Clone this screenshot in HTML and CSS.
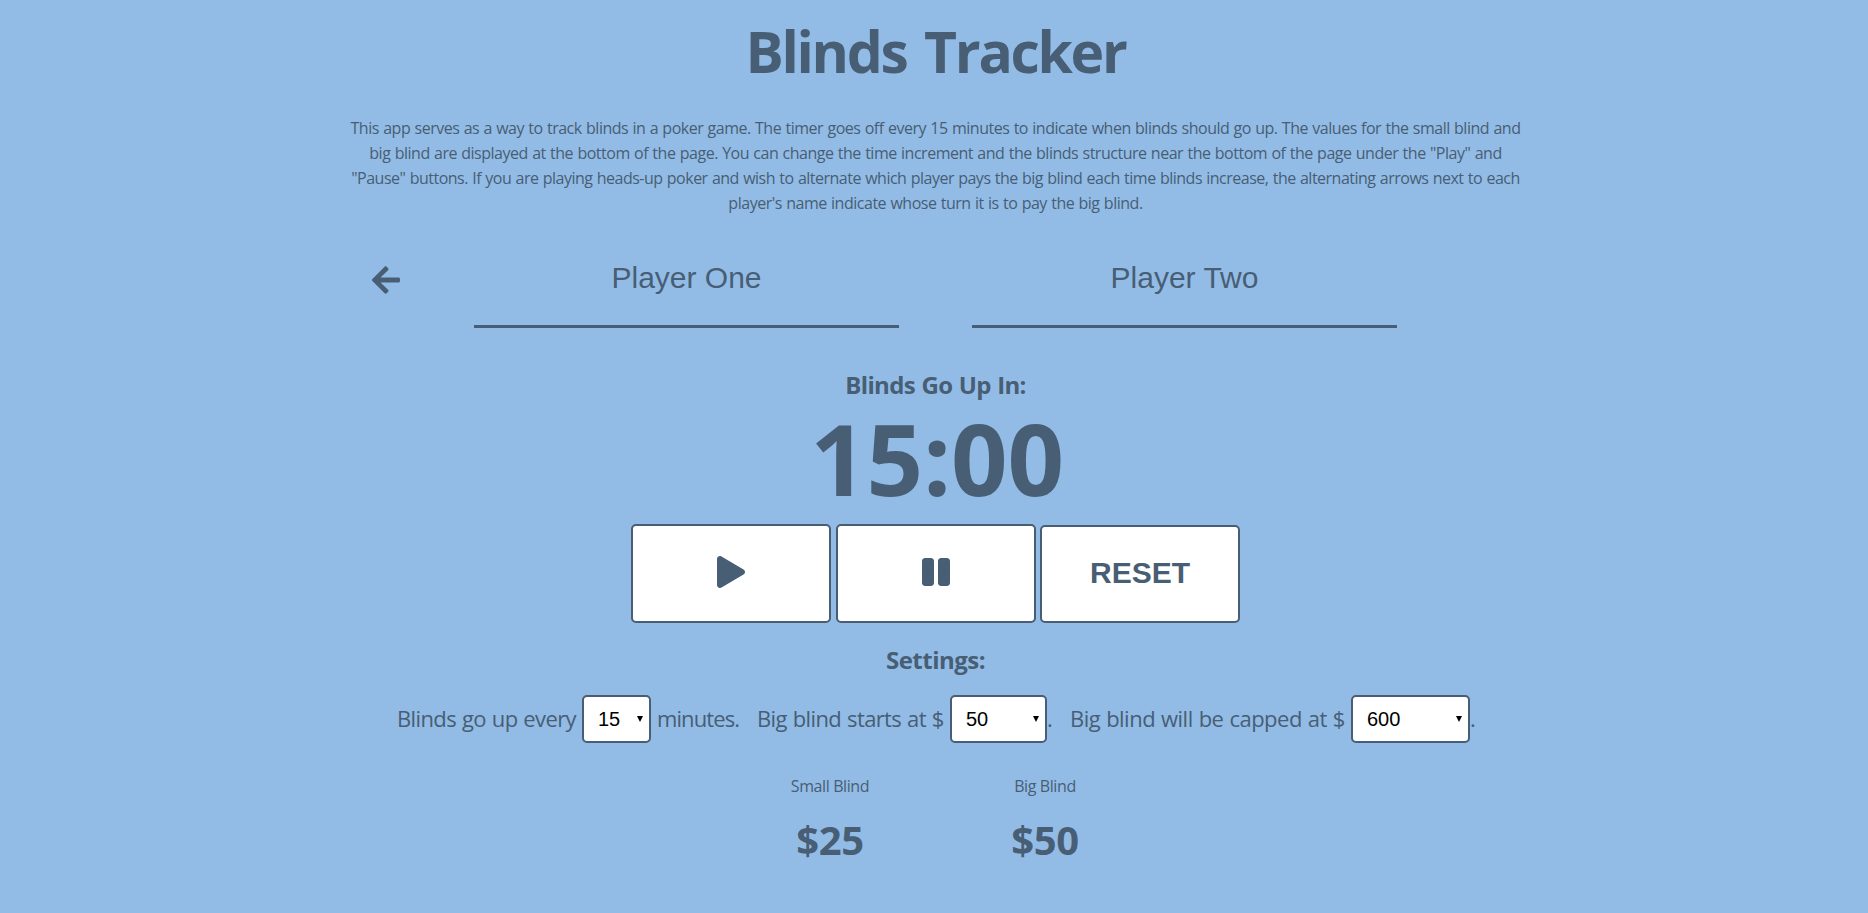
FILE: index.html
```html
<!DOCTYPE html>
<html lang="en">
<head>
<meta charset="utf-8">
<title>Blinds Tracker</title>
<link rel="stylesheet" href="styles.css">
</head>
<body>
<main class="app">
  <h1 class="title">Blinds Tracker</h1>
  <p class="intro">
    <span class="line l1">This app serves as a way to track blinds in a poker game. The timer goes off every 15 minutes to indicate when blinds should go up. The values for the small blind and</span>
    <span class="line l2">big blind are displayed at the bottom of the page. You can change the time increment and the blinds structure near the bottom of the page under the "Play" and</span>
    <span class="line l3">"Pause" buttons. If you are playing heads-up poker and wish to alternate which player pays the big blind each time blinds increase, the alternating arrows next to each</span>
    <span class="line l4">player's name indicate whose turn it is to pay the big blind.</span>
  </p>
  <section class="players">
    <svg class="arrow" viewBox="0 0 448 512"><path fill="currentColor" d="M257.500 445.100l-22.200 22.200c-9.400 9.400-24.600 9.400-33.900 0L7 273c-9.400-9.400-9.400-24.600 0-33.900L201.400 44.700c9.400-9.400 24.600-9.400 33.900 0l22.200 22.200c9.500 9.500 9.300 25-.4 34.300L136.600 216H424c13.300 0 24 10.700 24 24v32c0 13.300-10.700 24-24 24H136.600l120.500 114.800c9.800 9.300 10 24.800.4 34.300z"/></svg>
    <input class="player" type="text" value="Player One" aria-label="Player one">
    <input class="player" type="text" value="Player Two" aria-label="Player two">
  </section>
  <h2 class="heading up">Blinds Go Up In:</h2>
  <div class="timer">15:00</div>
  <div class="controls">
    <button class="btn" aria-label="Play"><svg class="play" viewBox="0 0 448 512"><path fill="currentColor" d="M424.400 214.700L72.400 6.600C43.800-10.300 0 6.100 0 47.900V464c0 37.500 40.700 60.100 72.400 41.300l352-208c31.400-18.500 31.500-64.100 0-82.600z"/></svg></button>
    <button class="btn pause-btn" aria-label="Pause"><svg class="pause" viewBox="0 0 448 512"><path fill="currentColor" d="M144 479H48c-26.500 0-48-21.500-48-48V79c0-26.500 21.500-48 48-48h96c26.500 0 48 21.500 48 48v352c0 26.500-21.500 48-48 48zm304-48V79c0-26.500-21.500-48-48-48h-96c-26.500 0-48 21.500-48 48v352c0 26.500 21.500 48 48 48h96c26.500 0 48-21.500 48-48z"/></svg></button>
    <button class="btn reset">RESET</button>
  </div>
  <h2 class="heading settings-heading">Settings:</h2>
  <section class="settings">
    <span class="label every">Blinds go up every</span>
    <div class="select minutes"><span>15</span><i class="caret"></i></div>
    <span class="label unit">minutes.</span>
    <span class="label starts">Big blind starts at $</span>
    <div class="select start"><span>50</span><i class="caret"></i></div>
    <span class="label dot">.</span>
    <span class="label capped">Big blind will be capped at $</span>
    <div class="select cap"><span>600</span><i class="caret"></i></div>
    <span class="label dot">.</span>
  </section>
  <section class="blinds">
    <div class="blind small"><div class="name">Small Blind</div><div class="amount">$25</div></div>
    <div class="blind big"><div class="name">Big Blind</div><div class="amount">$50</div></div>
  </section>
</main>
</body>
</html>
```
FILE: styles.css
```css
* { box-sizing: border-box; }
body {
  margin: 0;
  background: #92bce6;
  color: #485e74;
  font-family: "Open Sans", "Noto Sans", sans-serif;
  overflow: hidden;
}
.app { width: 1868px; height: 913px; padding-top: 11px; display: flex; flex-direction: column; align-items: center; }
.title { margin: 0; padding-left: 3px; font-size: 57px; line-height: 80px; font-weight: 700; letter-spacing: -2.3px; word-spacing: 5px; white-space: nowrap; }
.intro { margin: 25px 0 0; width: 1200px; padding-left: 3px; font-size: 16px; line-height: 25px; letter-spacing: -0.48px; word-spacing: 0.6px; }
.line { display: flex; justify-content: center; white-space: nowrap; }
.l3 { letter-spacing: -0.5px; }
.players { margin-top: 32px; padding-left: 372px; width: 1868px; height: 80px; display: flex; align-items: flex-start; }
.arrow { width: 28px; height: 32px; margin: 16px 74px 0 0; }
.player {
  width: 425px; height: 80px; margin: 0 73px 0 0; padding: 0 0 18px;
  border: 0; border-bottom: 3px solid #485e74; border-radius: 0; background: transparent;
  color: inherit; font: 30px "Liberation Sans", Arial, sans-serif; text-align: center; outline: 0;
}
.heading { margin: 0; padding-left: 3px; font-size: 24px; line-height: 40px; font-weight: 700; letter-spacing: -0.65px; word-spacing: 0.8px; white-space: nowrap; }
.up { margin-top: 37px; }
.timer { margin-top: 2px; padding-left: 6px; font-size: 99px; line-height: 102px; height: 117px; font-weight: 700; letter-spacing: -0.2px; }
.controls { width: 609px; margin-left: 3px; height: 99px; display: flex; align-items: flex-end; }
.btn {
  width: 200px; height: 99px; padding: 0; border: 2px solid #485e74; border-radius: 5px; background: #fff;
  color: inherit; font: bold 30px "Liberation Sans", Arial, sans-serif; display: flex; align-items: center; justify-content: center;
}
.pause-btn { margin: 0 4px 0 5px; }
.play, .pause { width: 28px; height: 32px; margin-top: -3px; }
.reset { height: 98px; padding-bottom: 2px; }
.settings-heading { margin-top: 17px; letter-spacing: -0.5px; }
.settings { width: 1868px; height: 48px; margin-top: 15px; padding-left: 397px; display: flex; align-items: flex-start; font-size: 22px; line-height: 46px; word-spacing: 0.8px; }
.label { flex: none; white-space: nowrap; }
.every { width: 185px; letter-spacing: -0.62px; }
.unit { width: 106px; padding-left: 6px; letter-spacing: -0.9px; }
.starts { width: 193px; letter-spacing: -0.62px; }
.dot { width: 23px; }
.capped { width: 281px; letter-spacing: -0.52px; }
.select {
  flex: none; height: 48px; padding: 0 6px 0 14px; border: 2px solid #485e74; border-radius: 5px; background: #fff; color: #000;
  font: 20px/44px "Liberation Sans", Arial, sans-serif; display: flex; align-items: center; justify-content: space-between;
}
.minutes { width: 69px; }
.start { width: 97px; }
.cap { width: 119px; }
.caret { border: 3px solid transparent; border-top: 6px solid #000; border-bottom: 0; }
.blinds { width: 1868px; margin-top: 29px; padding-left: 730px; display: flex; }
.blind { width: 200px; display: flex; flex-direction: column; align-items: center; }
.big { margin-left: 15px; }
.name { font-size: 16px; line-height: 28px; letter-spacing: -0.4px; }
.amount { margin-top: 10px; font-size: 40px; line-height: 60px; font-weight: 700; letter-spacing: -0.4px; }
```
